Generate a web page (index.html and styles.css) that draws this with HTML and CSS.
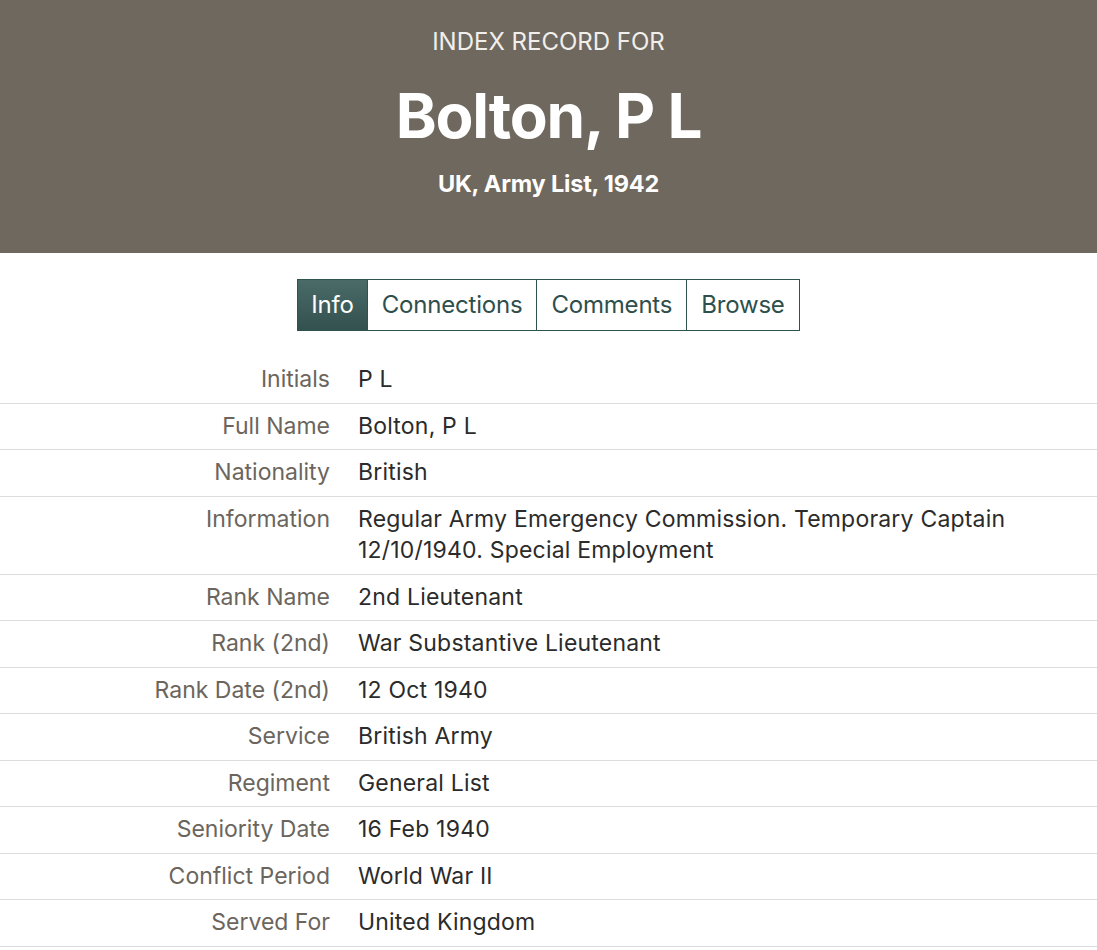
FILE: index.html
```html
<!DOCTYPE html>
<html lang="en">
<head>
<meta charset="utf-8">
<title>Bolton, P L – UK, Army List, 1942</title>
<link rel="stylesheet" href="styles.css">
</head>
<body>
<header class="record-header">
  <p class="record-kicker">INDEX RECORD FOR</p>
  <h1 class="record-name">Bolton, P L</h1>
  <p class="record-source">UK, Army List, 1942</p>
</header>

<nav class="tabs">
  <a class="tab tab-active" href="#">Info</a>
  <a class="tab" href="#">Connections</a>
  <a class="tab" href="#">Comments</a>
  <a class="tab" href="#">Browse</a>
</nav>

<dl class="fields">
  <div class="field"><dt>Initials</dt><dd>P L</dd></div>
  <div class="field"><dt>Full Name</dt><dd>Bolton, P L</dd></div>
  <div class="field"><dt>Nationality</dt><dd>British</dd></div>
  <div class="field"><dt>Information</dt><dd>Regular Army Emergency Commission. Temporary Captain 12/10/1940. Special Employment</dd></div>
  <div class="field"><dt>Rank Name</dt><dd>2nd Lieutenant</dd></div>
  <div class="field"><dt>Rank (2nd)</dt><dd>War Substantive Lieutenant</dd></div>
  <div class="field"><dt>Rank Date (2nd)</dt><dd>12 Oct 1940</dd></div>
  <div class="field"><dt>Service</dt><dd>British Army</dd></div>
  <div class="field"><dt>Regiment</dt><dd>General List</dd></div>
  <div class="field"><dt>Seniority Date</dt><dd>16 Feb 1940</dd></div>
  <div class="field"><dt>Conflict Period</dt><dd>World War II</dd></div>
  <div class="field"><dt>Served For</dt><dd>United Kingdom</dd></div>
</dl>
</body>
</html>
```

FILE: styles.css
```css
html, body {
  margin: 0;
  padding: 0;
  background: #fff;
}

body {
  font-family: Inter, "Liberation Sans", Arial, sans-serif;
  color: #2b2b2b;
}

/* Title band */
.record-header {
  background: #6f685e;
  color: #fff;
  text-align: center;
  height: 253px;
  box-sizing: border-box;
  padding-top: 28px;
}

.record-kicker {
  margin: 0;
  font-size: 24px;
  line-height: 28px;
  color: #f1efec;
}

.record-name {
  margin: 24px 0 0;
  font-size: 62px;
  line-height: 72px;
  font-weight: 700;
  letter-spacing: -1.2px;
}

.record-source {
  margin: 18px 0 0;
  font-size: 23.5px;
  line-height: 28px;
  font-weight: 700;
  letter-spacing: -0.2px;
}

/* Tab strip */
.tabs {
  display: flex;
  justify-content: center;
  margin-top: 26px;
}

.tab {
  display: block;
  border: 1px solid #2f5450;
  border-left-width: 0;
  padding: 0 14px;
  height: 50px;
  line-height: 50px;
  font-size: 24px;
  letter-spacing: -0.2px;
  color: #2f4f4c;
  text-decoration: none;
  background: #fff;
}

.tab:first-child {
  border-left-width: 1px;
  padding: 0 13px;
}

.tab-active {
  color: #fff;
  background: linear-gradient(#4a6b68, #33524f);
}

/* Field list */
.fields {
  margin: 26px 0 0;
  padding: 0;
}

.field {
  display: flex;
  border-bottom: 1px solid #dcdcdc;
  padding: 7px 0;
  font-size: 23px;
  line-height: 31.5px;
}

.field dt {
  flex: 0 0 330px;
  text-align: right;
  color: #6b655d;
}

.field dd {
  margin: 0;
  padding-left: 28px;
  max-width: 700px;
  color: #2b2b2b;
  letter-spacing: 0.2px;
}
```
